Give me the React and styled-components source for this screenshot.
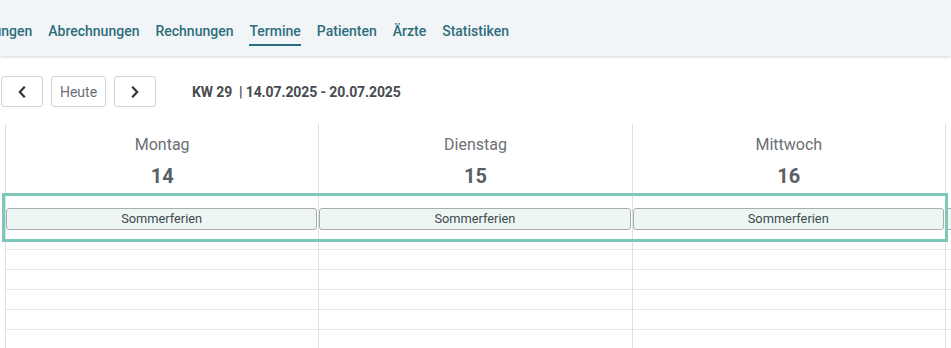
import React from "react";
import styled, { createGlobalStyle } from "styled-components";

const Global = createGlobalStyle`
  html, body { margin: 0; padding: 0; background: #ffffff; overflow: hidden; }
  body { font-family: Roboto, "Liberation Sans", Arial, sans-serif; }
  * { box-sizing: border-box; }
`;

const Page = styled.div`
  width: 951px;
  height: 348px;
  overflow: hidden;
  position: relative;
`;

const Header = styled.header`
  height: 56px;
  background: #f1f5f8;
  box-shadow: 0 1px 3px rgba(0, 0, 0, 0.18);
  padding-top: 22px;
  overflow: hidden;
  position: relative;
  z-index: 1;
`;

const Nav = styled.nav`
  display: flex;
  gap: 16px;
  margin-left: -56px;
`;

const NavItem = styled.a`
  font-size: 14px;
  font-weight: 500;
  line-height: 18px;
  color: #2f6d7c;
  white-space: nowrap;
  padding-bottom: 4px;
  border-bottom: 2px solid ${(p) => (p.$active ? "#2b6d80" : "transparent")};
  text-decoration: none;
`;

const Toolbar = styled.div`
  display: flex;
  align-items: center;
  margin-top: 20px;
  padding-left: 1px;
  height: 31px;
`;

const ButtonGroup = styled.div`
  display: flex;
  gap: 8px;
`;

const ToolButton = styled.button`
  height: 31px;
  width: ${(p) => p.$w}px;
  border: 1px solid #cfd2d6;
  border-radius: 3px;
  background: #ffffff;
  display: flex;
  align-items: center;
  justify-content: center;
  padding: 0;
  font-family: Roboto, "Liberation Sans", Arial, sans-serif;
  font-size: 14px;
  color: #6a6f75;
`;

const WeekLabel = styled.div`
  margin-left: 36px;
  font-size: 14px;
  font-weight: 700;
  letter-spacing: -0.1px;
  color: #474b50;
  white-space: pre;
`;

const CalendarWrap = styled.div`
  position: relative;
  margin-top: 17px;
`;

const Columns = styled.div`
  display: flex;
  margin-left: 5px;
`;

const DayColumn = styled.div`
  flex: 0 0 313.3px;
  border-left: 1px solid #dde0e6;
`;

const DayHead = styled.div`
  height: 72px;
  padding-top: 11px;
  display: flex;
  flex-direction: column;
  align-items: center;
`;

const DayName = styled.div`
  font-size: 16px;
  line-height: 20px;
  color: #6b6f75;
`;

const DayNum = styled.div`
  margin-top: 9px;
  font-size: 20px;
  line-height: 24px;
  font-weight: 700;
  color: #5a5f66;
`;

const AllDay = styled.div`
  height: 45px;
  padding: 12px 0 0 0;
  margin-left: -1px;
`;

const Chip = styled.div`
  height: 22px;
  margin: 0 1px;
  border: 1px solid #a9aeb4;
  border-radius: 3px;
  background: #edf6f3;
  font-size: 12.8px;
  line-height: 20px;
  color: #3d4a52;
  text-align: center;
  white-space: nowrap;
  overflow: hidden;
`;

const Slots = styled.div`
  padding-top: 8px;
`;

const Slot = styled.div`
  height: 20px;
  border-top: 1px solid #e6e7e9;
`;

const Highlight = styled.div`
  position: absolute;
  left: 2px;
  top: 69px;
  width: 946px;
  height: 49px;
  border: 3px solid #7dc8b8;
  pointer-events: none;
`;

const Chevron = ({ dir }) => (
  <svg width="10" height="12" viewBox="0 0 10 12" aria-hidden="true">
    <path
      d={dir === "left" ? "M7 1.5 L2.8 6 L7 10.5" : "M3 1.5 L7.2 6 L3 10.5"}
      fill="none"
      stroke="#33373c"
      strokeWidth="2.2"
      strokeLinecap="square"
      strokeLinejoin="miter"
    />
  </svg>
);

const navItems = [
  "Verordnungen",
  "Abrechnungen",
  "Rechnungen",
  "Termine",
  "Patienten",
  "Ärzte",
  "Statistiken",
];

const days = [
  { name: "Montag", num: 14 },
  { name: "Dienstag", num: 15 },
  { name: "Mittwoch", num: 16 },
  { name: "Donnerstag", num: 17 },
];

export default function App() {
  return (
    <Page>
      <Global />
      <Header>
        <Nav>
          {navItems.map((n) => (
            <NavItem key={n} $active={n === "Termine"}>
              {n}
            </NavItem>
          ))}
        </Nav>
      </Header>
      <Toolbar>
        <ButtonGroup>
          <ToolButton $w={42}>
            <Chevron dir="left" />
          </ToolButton>
          <ToolButton $w={55}>Heute</ToolButton>
          <ToolButton $w={42}>
            <Chevron dir="right" />
          </ToolButton>
        </ButtonGroup>
        <WeekLabel>{"KW 29  | 14.07.2025 - 20.07.2025"}</WeekLabel>
      </Toolbar>
      <CalendarWrap>
        <Columns>
          {days.map((d) => (
            <DayColumn key={d.name}>
              <DayHead>
                <DayName>{d.name}</DayName>
                <DayNum>{d.num}</DayNum>
              </DayHead>
              <AllDay>
                <Chip>Sommerferien</Chip>
              </AllDay>
              <Slots>
                {Array.from({ length: 6 }).map((_, i) => (
                  <Slot key={i} />
                ))}
              </Slots>
            </DayColumn>
          ))}
        </Columns>
        <Highlight />
      </CalendarWrap>
    </Page>
  );
}
